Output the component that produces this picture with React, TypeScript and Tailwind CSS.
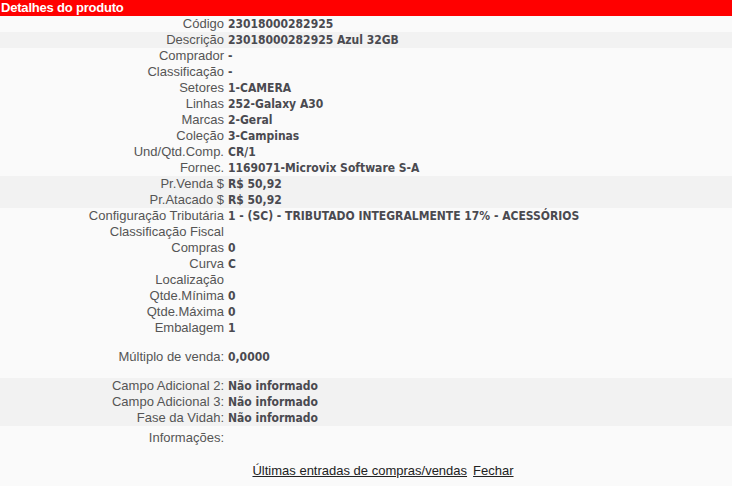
const font = { fontFamily: '"Liberation Sans", Arial, sans-serif' };
const valueFont = { fontFamily: '"DejaVu Sans Condensed", "DejaVu Sans", sans-serif' };

type Row = { label: string; value?: string };

const Field = ({ label, value }: Row) => (
  <div className="flex h-4 items-center leading-4">
    <span className="w-[224px] shrink-0 text-right text-[13px] text-[#555]">{label}</span>
    <span className="pl-1 text-[12px] font-bold font-stretch-condensed text-[#4a4a50]" style={valueFont}>
      {value}
    </span>
  </div>
);

const App = () => {
  return (
    <div className="min-h-[486px] bg-[#fafafa] text-[12px]" style={font}>
      {/* Title bar */}
      <div className="h-4 bg-[#ff0000] px-px text-[13px] font-bold leading-4 tracking-[-0.2px] text-white">
        Detalhes do produto
      </div>

      <div className="bg-[#fafafa]">
        <Field label="Código" value="23018000282925" />
      </div>
      <div className="bg-[#f2f2f2]">
        <Field label="Descrição" value="23018000282925 Azul 32GB" />
      </div>
      <div className="bg-[#fafafa]">
        <Field label="Comprador" value="-" />
        <Field label="Classificação" value="-" />
        <Field label="Setores" value="1-CAMERA" />
        <Field label="Linhas" value="252-Galaxy A30" />
        <Field label="Marcas" value="2-Geral" />
        <Field label="Coleção" value="3-Campinas" />
        <Field label="Und/Qtd.Comp." value="CR/1" />
        <Field label="Fornec." value="1169071-Microvix Software S-A" />
      </div>
      <div className="bg-[#f2f2f2]">
        <Field label="Pr.Venda $" value="R$ 50,92" />
        <Field label="Pr.Atacado $" value="R$ 50,92" />
      </div>
      <div className="bg-[#fafafa]">
        <Field label="Configuração Tributária" value="1 - (SC) - TRIBUTADO INTEGRALMENTE 17% - ACESSÓRIOS" />
        <Field label="Classificação Fiscal" />
        <Field label="Compras" value="0" />
        <Field label="Curva" value="C" />
        <Field label="Localização" />
        <Field label="Qtde.Mínima" value="0" />
        <Field label="Qtde.Máxima" value="0" />
        <Field label="Embalagem" value="1" />
      </div>

      {/* Múltiplo */}
      <div className="bg-[#fafafa] py-[13px]">
        <Field label="Múltiplo de venda:" value="0,0000" />
      </div>

      {/* Campos adicionais */}
      <div className="bg-[#f2f2f2]">
        <Field label="Campo Adicional 2:" value="Não informado" />
        <Field label="Campo Adicional 3:" value="Não informado" />
        <Field label="Fase da Vidah:" value="Não informado" />
      </div>

      <div className="pt-1 pb-4">
        <Field label="Informações:" />
      </div>

      <div className="flex justify-center gap-[6px] pt-[1px] pl-[34px] text-[13px] leading-4 text-[#222]">
        <a className="underline" href="#">Últimas entradas de compras/vendas</a>
        <a className="underline" href="#">Fechar</a>
      </div>
    </div>
  );
};

export default App;
